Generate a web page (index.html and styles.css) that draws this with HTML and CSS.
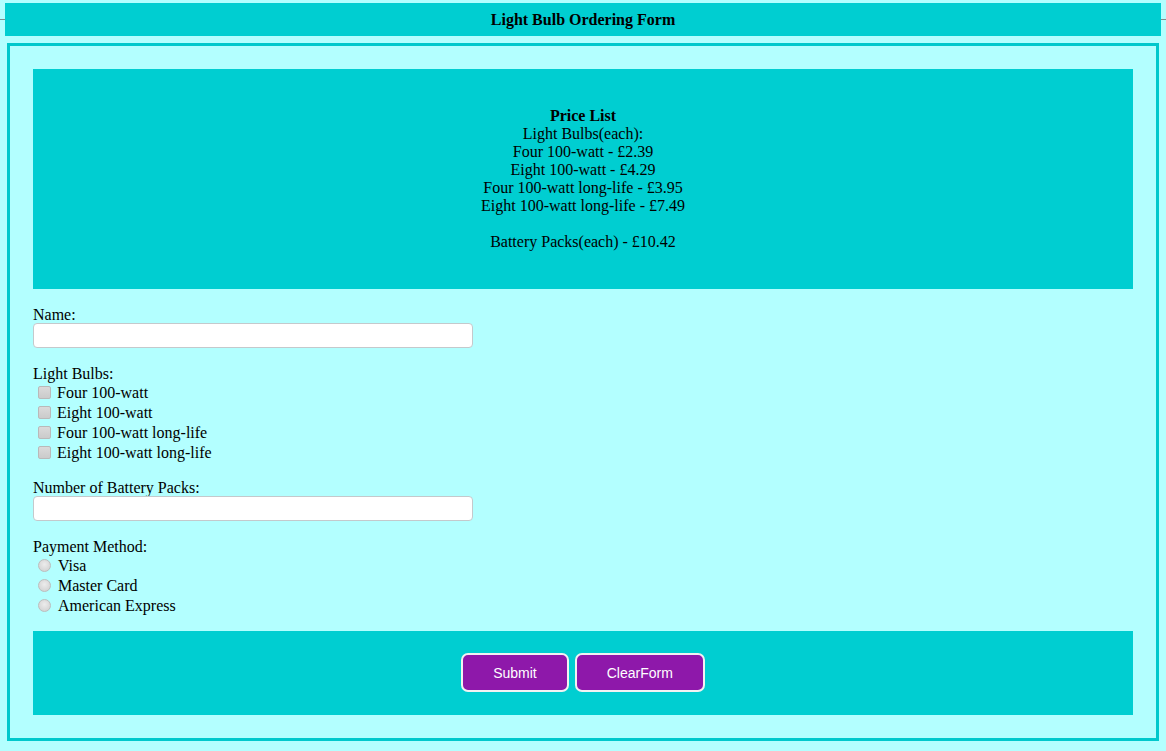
FILE: index.html
```html
<!DOCTYPE html>
<html>
<head>
<meta charset="utf-8">
<title>Light Bulb Ordering Form</title>
<link rel="stylesheet" href="styles.css">
</head>
<body>
<div class="topbar">
  <h1 class="title">Light Bulb Ordering Form</h1>
</div>
<form class="order">
  <div class="prices">
    <strong>Price List</strong><br>
    Light Bulbs(each):<br>
    Four 100-watt - £2.39<br>
    Eight 100-watt - £4.29<br>
    Four 100-watt long-life - £3.95<br>
    Eight 100-watt long-life - £7.49<br>
    <br>
    Battery Packs(each) - £10.42
  </div>

  <div class="field">
    <label class="label" for="name">Name:</label>
    <input class="text" id="name" type="text">
  </div>

  <div class="field">
    <div class="label">Light Bulbs:</div>
    <label class="opt"><input class="check" type="checkbox"><span class="optText">Four 100-watt</span></label>
    <label class="opt"><input class="check" type="checkbox"><span class="optText">Eight 100-watt</span></label>
    <label class="opt"><input class="check" type="checkbox"><span class="optText">Four 100-watt long-life</span></label>
    <label class="opt"><input class="check" type="checkbox"><span class="optText">Eight 100-watt long-life</span></label>
  </div>

  <div class="field">
    <label class="label" for="packs">Number of Battery Packs:</label>
    <input class="text" id="packs" type="text">
  </div>

  <div class="field">
    <div class="label">Payment Method:</div>
    <label class="opt"><input class="radio" type="radio" name="pay"><span class="optText">Visa</span></label>
    <label class="opt"><input class="radio" type="radio" name="pay"><span class="optText">Master Card</span></label>
    <label class="opt"><input class="radio" type="radio" name="pay"><span class="optText">American Express</span></label>
  </div>

  <div class="actions">
    <button class="btn" type="button">Submit</button>
    <button class="btn" type="reset">ClearForm</button>
  </div>
</form>
</body>
</html>
```
FILE: styles.css
```css
html, body {
  margin: 0;
  padding: 0;
  background: #b3ffff;
}
body {
  font-family: "Liberation Serif", "Times New Roman", serif;
  font-size: 16px;
  line-height: 18px;
  color: #000;
  padding-top: 3px;
  padding-bottom: 10px;
}
.topbar {
  background: linear-gradient(#7f8c8c, #7f8c8c) no-repeat 0 16px / 100% 1px;
}
.title {
  margin: 0 5px;
  height: 33px;
  background: #00ced1;
  font-size: 16px;
  font-weight: bold;
  line-height: 34px;
  text-align: center;
}
.order {
  margin: 7px 7px 0 7px;
  border: 3px solid #00c8cc;
  padding: 23px;
  display: flex;
  flex-direction: column;
}
.prices {
  background: #00ced1;
  text-align: center;
  padding: 38px 0;
}
.field {
  margin-top: 16px;
  display: flex;
  flex-direction: column;
  align-items: flex-start;
}
.label {
  display: block;
  padding-top: 1px;
  margin-bottom: -1px;
}
.text {
  box-sizing: border-box;
  width: 440px;
  height: 25px;
  margin: 0;
  border: 1px solid #c4c9cc;
  border-radius: 4px;
  background: #fff;
  font: inherit;
}
.opt {
  display: flex;
  align-items: center;
  height: 20px;
  padding-top: 2px;
  box-sizing: border-box;
}
.optText {
  margin-left: 4px;
}
.check {
  appearance: none;
  -webkit-appearance: none;
  box-sizing: border-box;
  width: 13px;
  height: 13px;
  margin: 0 2px 2px 5px;
  border: 1px solid #b9b9b9;
  border-radius: 2px;
  background: linear-gradient(#dadada, #cbcbcb);
}
.radio {
  appearance: none;
  -webkit-appearance: none;
  box-sizing: border-box;
  width: 13px;
  height: 13px;
  margin: 0 3px 2px 5px;
  border: 1px solid #bdbdbd;
  border-radius: 50%;
  background: radial-gradient(circle at 50% 40%, #ececec, #cdcdcd);
}
.actions {
  margin-top: 16px;
  background: #00ced1;
  padding: 22px 0 23px;
  display: flex;
  justify-content: center;
  gap: 6px;
}
.btn {
  height: 39px;
  padding: 0 30px;
  border: 2px solid #f2f2f2;
  border-radius: 7px;
  background: #8e18aa;
  color: #fff;
  font-family: "Liberation Sans", Arial, sans-serif;
  font-size: 14px;
  cursor: pointer;
}
```
